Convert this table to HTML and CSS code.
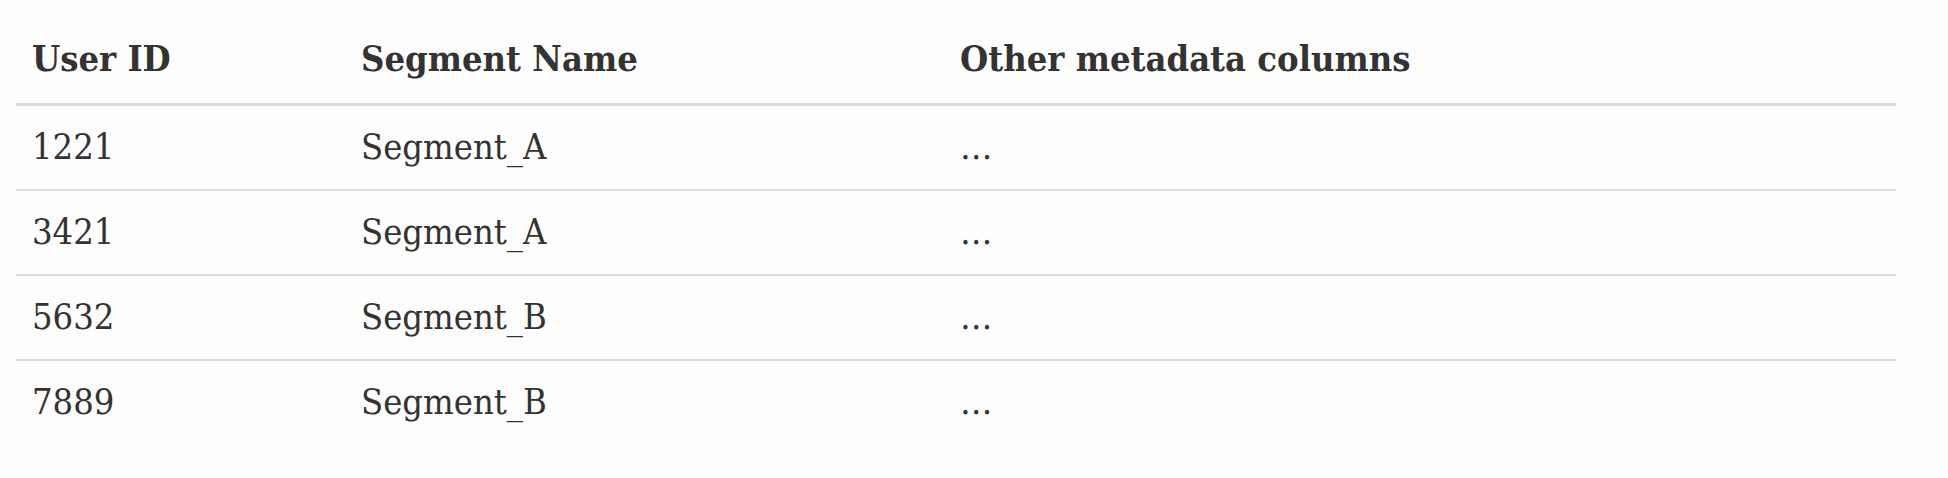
FILE: index.html
```html
<!DOCTYPE html>
<html lang="en">
<head>
<meta charset="utf-8">
<title>Segments</title>
<link rel="stylesheet" href="styles.css">
</head>
<body>
<div class="page">
  <table class="data-table">
    <colgroup>
      <col class="col-id">
      <col class="col-seg">
      <col class="col-meta">
    </colgroup>
    <thead>
      <tr>
        <th>User ID</th>
        <th>Segment Name</th>
        <th>Other metadata columns</th>
      </tr>
    </thead>
    <tbody>
      <tr><td>1221</td><td>Segment_A</td><td>…</td></tr>
      <tr><td>3421</td><td>Segment_A</td><td>…</td></tr>
      <tr><td>5632</td><td>Segment_B</td><td>…</td></tr>
      <tr><td>7889</td><td>Segment_B</td><td>…</td></tr>
    </tbody>
  </table>
</div>
</body>
</html>
```

FILE: styles.css
```css
html, body {
  margin: 0;
  padding: 0;
  background: #fdfdfd;
}

.page {
  padding: 20px 52px 0 16px;
}

.data-table {
  width: 100%;
  border-collapse: collapse;
  table-layout: fixed;
  font-family: "DejaVu Serif Condensed", "DejaVu Serif", serif;
  font-stretch: condensed;
  font-size: 36px;
  line-height: 54px;
  color: #333333;
}

.col-id { width: 329px; }
.col-seg { width: 599px; }
.col-meta { width: auto; }

.data-table th,
.data-table td {
  text-align: left;
  padding: 14px 16px 15px 16px;
  vertical-align: middle;
}

.data-table th {
  font-weight: bold;
  padding-top: 11px;
  padding-bottom: 18px;
  border-bottom: 3px solid #dddddd;
}

.data-table tbody tr + tr td {
  border-top: 2px solid #dddddd;
}
```
